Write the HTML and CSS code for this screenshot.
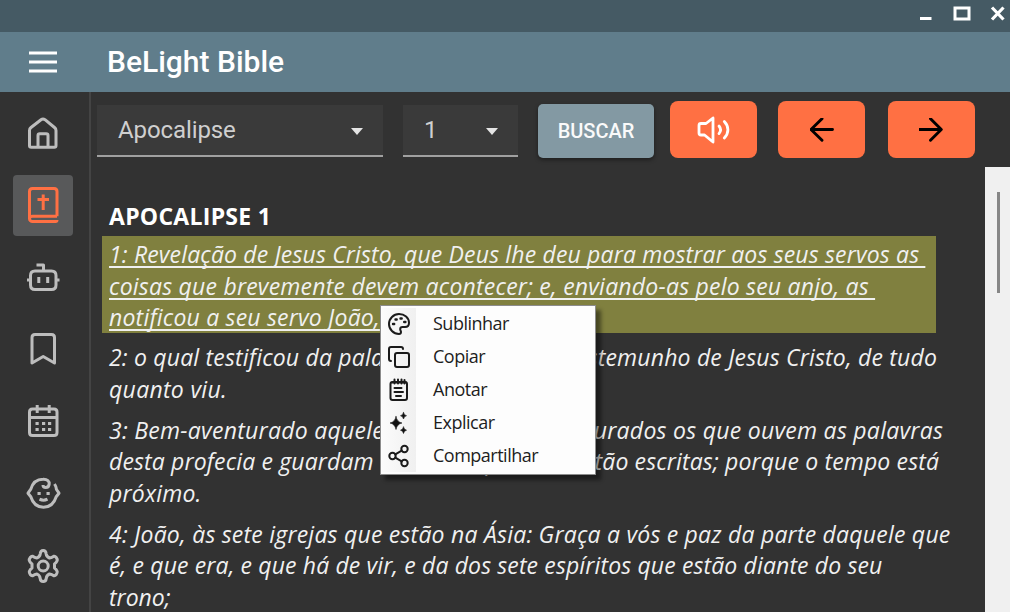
FILE: index.html
```html
<!DOCTYPE html>
<html lang="pt-BR">
<head>
<meta charset="utf-8">
<title>BeLight Bible</title>
<link rel="stylesheet" href="styles.css">
</head>
<body>
<div class="window">
  <header class="titlebar">
    <svg class="win-controls" width="90" height="28" viewBox="0 0 90 28" fill="none" stroke="#fff">
      <path d="M-1 18.5h12.5" stroke-width="3"/>
      <path d="M35 8h14v11H35z" stroke-width="3"/>
      <path d="M72 7.500l11.500 12M83.500 7.500l-11.500 12" stroke-width="3.200"/>
    </svg>
  </header>
  <header class="appbar">
    <svg class="burger" width="28" height="24" viewBox="0 0 28 24" stroke="#fff" stroke-width="2.800"><path d="M0 3h28M0 12h28M0 21h28"/></svg>
    <h1 class="app-title">BeLight Bible</h1>
  </header>
  <div class="body">
    <nav class="sidebar">
      <a class="nav-item"><svg viewBox="0 0 36 36"><path d="M4.500 14.500c0-1.300.5-2.200 1.500-3L16 3.700c1.300-1 2.700-1 4 0l9.500 7.800c1 .8 1.500 1.700 1.500 3V29.500c0 1-.7 1.700-1.700 1.700H6.200c-1 0-1.700-.7-1.700-1.700zM13 31V19.500c0-1.200.7-1.800 1.800-1.800h6.400c1.100 0 1.800.6 1.800 1.800V31"/></svg></a>
      <a class="nav-item active"><svg viewBox="0 0 36 36"><path d="M32 28.200H7.500C5.800 28.200 4.500 29.300 4.500 30.800S5.800 33.500 7.500 33.500H30.500c.9 0 1.500-.7 1.500-1.500M4.500 31V3.500C4.500 1.500 5.500.5 7.500.5H29c2 0 3 1 3 3V28.200M18.200 6.500V22M12.500 11.500H24"/></svg></a>
      <a class="nav-item"><svg viewBox="0 0 36 36"><path d="M10 11H26.500c2.800 0 4.500 1.500 4.500 4.500v9.500c0 3-1.700 4.500-4.500 4.500H10c-2.800 0-4.500-1.500-4.500-4.500V15.500c0-3 1.700-4.500 4.500-4.500zM18.500 10.500V5H11.500M2 20H5.500M31 20H34.500M13.800 17v6M22.700 17v6"/></svg></a>
      <a class="nav-item"><svg viewBox="0 0 36 36"><path d="M7 31V5.500c0-2 .9-3 3-3h16.500c2 0 3 1 3 3V31L18.200 24.500z"/></svg></a>
      <a class="nav-item"><svg viewBox="0 0 36 36"><path d="M7.500 5H29c2 0 3 1 3 3V28.500c0 2-1 3-3 3H7.500c-2 0-3-1-3-3V8c0-2 1-3 3-3zM5 13.500H32M12.200 1V9M24.200 1V9"/><path class="dots" d="M10.500 19.500h3.200M17 19.500h3.200M23 19.500h3.200M10.500 25.500h3.200M17 25.500h3.200M23 25.500h3.200"/></svg></a>
      <a class="nav-item"><svg viewBox="0 0 36 36"><path d="M29.500 8c1.200 1.700 1.800 3.500 2 5.500L34 17.200l-2.800 3.500C29.200 27.200 24.500 31.200 18.500 31.200S7.800 27.200 5.800 20.700L3 17.200l2.800-4C7.500 7.200 12 3.200 18 3.200c4.500-.2 6.500 2.200 6.200 4.800-.2 2.300-1.800 3.500-3.500 3.500-1.600 0-2.700-1-2.700-2.500M14.500 23.200c2.400 1.200 5.600 1.200 8 0"/><path class="dots" d="M12.500 17.500h3.200M21.500 17.500h3.200"/></svg></a>
      <a class="nav-item"><svg viewBox="0 0 36 36"><path d="M15.200 6Q15.500 2.500 18.200 2.500T21.200 6Q21.500 8.700 24.500 10 27 9.500 28.800 8.300C30.500 7.800 32.500 10.500 32.200 12.500Q31.500 14.500 29.500 16V20Q31.500 21.500 32.200 23.500C32.500 25.500 30.500 28.200 28.800 27.700Q27 26.500 24.500 26 21.500 27.300 21.200 30.500 20.900 33.500 18.200 33.500T15.200 30.500Q14.900 27.300 12 26 9.500 26.500 7.700 27.700C6 28.200 4 25.500 4.300 23.500Q5 21.500 7 20V16Q5 14.500 4.300 12.500C4 10.500 6 7.800 7.700 8.300Q9.500 9.500 12 10 14.900 8.700 15.200 6z"/><circle cx="18.200" cy="18" r="5"/></svg></a>
    </nav>
    <main class="main">
      <div class="toolbar">
        <div class="select book"><span class="value">Apocalipse</span><i class="caret"></i></div>
        <div class="select chapter"><span class="value">1</span><i class="caret"></i></div>
        <button class="search">BUSCAR</button>
        <button class="action speak"><svg width="36" height="32" viewBox="0 0 36 32" fill="none" stroke="#fff" stroke-width="2.800" stroke-linecap="round" stroke-linejoin="round"><path d="M17 4L10 9.500H5c-1.200 0-2 .8-2 2v7.500c0 1.200.8 2 2 2h3.500L17 28z"/><path d="M23 12c2 2.400 2 5.200 0 7.600M28.300 7.500c4.800 5 4.800 11.500 0 16.500"/></svg></button>
        <button class="action prev"><svg width="24" height="24" viewBox="0 0 24 24" fill="none" stroke="#000" stroke-width="2.900" stroke-linecap="round" stroke-linejoin="round"><path d="M22.500 11.500H1M12 .7L1 11.500 12 22.300"/></svg></button>
        <button class="action next"><svg width="24" height="24" viewBox="0 0 24 24" fill="none" stroke="#000" stroke-width="2.900" stroke-linecap="round" stroke-linejoin="round"><path d="M.5 11.500H22M11.500 .7L22.300 11.500 11.500 22.300"/></svg></button>
      </div>
      <div class="content">
        <article class="reader">
          <h2 class="chapter-title">APOCALIPSE 1</h2>
          <p class="verse marked"><span class="line l1">1: Revelação de Jesus Cristo, que Deus lhe deu para mostrar aos seus servos as&nbsp;</span><span class="line l2">coisas que brevemente devem acontecer; e, enviando-as pelo seu anjo, as&nbsp;</span><span class="line l3">notificou a seu servo João,</span></p>
          <p class="verse"><span class="line l4">2: o qual testificou da palavra de Deus, e do testemunho de Jesus Cristo, de tudo</span><span class="line l5">quanto viu.</span></p>
          <p class="verse"><span class="line l6">3: Bem-aventurado aquele que lê, e bem-aventurados os que ouvem as palavras</span><span class="line l7">desta profecia e guardam as coisas que nela estão escritas; porque o tempo está</span><span class="line l8">próximo.</span></p>
          <p class="verse"><span class="line l9">4: João, às sete igrejas que estão na Ásia: Graça a vós e paz da parte daquele que</span><span class="line l10">é, e que era, e que há de vir, e da dos sete espíritos que estão diante do seu</span><span class="line l11">trono;</span></p>
        </article>
        <div class="scrollbar"><div class="thumb"></div></div>
      </div>
    </main>
  </div>
  <div class="menu">
    <div class="menu-item"><svg viewBox="0 0 24 24"><path d="M12 2C6.500 2 2 6.500 2 12c0 5.500 4.500 10 10 10 1.300 0 2-.9 2-2 0-1-.8-1.500-.8-2.700 0-1.300 1-2.300 2.300-2.300H18c2.400 0 4-1.800 4-4.300C22 5.500 17.500 2 12 2z"/><path class="solid" d="M6 12h1.200M8.500 7.500h1.200M13.500 6.500h1.200M17.200 10h1.200"/></svg><span>Sublinhar</span></div>
    <div class="menu-item"><svg viewBox="0 0 24 24"><rect x="8" y="8" width="14" height="14" rx="2"/><path d="M4 16c-1.100 0-2-.9-2-2V4c0-1.100.9-2 2-2h10c1.100 0 2 .9 2 2"/></svg><span>Copiar</span></div>
    <div class="menu-item"><svg viewBox="0 0 24 24"><rect x="3.500" y="4" width="16.500" height="18" rx="2"/><path d="M7.500 1.500v4M11 1.500v4M14.500 1.500v4M17.500 2v3.500M5 4.500h14M7.500 10h7M7.500 14h8.500M9 18h5"/></svg><span>Anotar</span></div>
    <div class="menu-item"><svg viewBox="0 0 24 24"><path class="fill" d="M9 5.500Q10 11 15 12 10 13 9 18.500 8 13 3 12 8 11 9 5.500zM16.500 1.500Q17 4.200 19.500 4.700 17 5.200 16.500 8 16 5.200 13.500 4.700 16 4.200 16.500 1.500zM16.500 16Q17 18.700 19.500 19.200 17 19.700 16.500 22.500 16 19.700 13.500 19.200 16 18.700 16.500 16z"/></svg><span>Explicar</span></div>
    <div class="menu-item"><svg viewBox="0 0 24 24"><circle cx="5.500" cy="12" r="3.200"/><circle cx="17.500" cy="5" r="3.200"/><circle cx="17.500" cy="19" r="3.200"/><path d="M8.300 10.400l6.400-3.800M8.300 13.600l6.400 3.800"/></svg><span>Compartilhar</span></div>
  </div>
</div>
</body>
</html>
```
FILE: styles.css
```css
* { box-sizing: border-box; }
body { margin: 0; background: #323232; font-family: Roboto, sans-serif; }
.window { position: relative; width: 1010px; height: 612px; overflow: hidden; display: flex; flex-direction: column; }
.titlebar { flex: none; height: 32px; background: #455a64; display: flex; justify-content: flex-end; }
.win-controls { display: block; }
.appbar { flex: none; height: 60px; background: #607d8b; display: flex; align-items: center; padding-left: 29px; gap: 50px; }
.burger { display: block; }
.app-title { margin: 0; color: #fff; font-size: 30px; line-height: 60px; font-weight: 500; white-space: nowrap; }
.body { flex: 1; display: flex; min-height: 0; }
.sidebar { flex: none; width: 91px; border-right: 2px solid #444; display: flex; flex-direction: column; align-items: center; gap: 11px; padding: 11px 3px 0 0; }
.nav-item { flex: none; width: 60px; height: 61px; border-radius: 4px; display: flex; align-items: center; justify-content: center; }
.nav-item svg { width: 36px; height: 36px; fill: none; stroke: #bdbdbd; stroke-width: 3; stroke-linejoin: round; overflow: visible; }
.nav-item .dots { stroke-width: 3.2; }
.nav-item.active { background: #58595a; }
.nav-item.active svg { stroke: #ff7043; }
.main { flex: 1; min-width: 0; display: flex; flex-direction: column; }
.toolbar { flex: none; height: 75px; display: flex; align-items: flex-start; padding: 9px 0 0 6px; }
.select { height: 52px; margin-top: 4px; background: #3a3a3a; border-bottom: 2px solid #a0a0a0; display: flex; justify-content: space-between; align-items: center; padding: 0 20px 1px 21px; color: #cfcfcf; font-size: 24px; }
.value { letter-spacing: -.1px; }
.book { width: 286px; }
.chapter { width: 115px; margin-left: 20px; }
.caret { border: 6px solid transparent; border-top: 7px solid #e4e4e4; border-bottom: 0; margin-top: 3px; }
.search { width: 116px; height: 54px; margin: 3px 0 0 20px; padding: 0; border: 0; border-radius: 5px; background: #8399a3; color: #fafafa; font: 500 20px Roboto, sans-serif; box-shadow: 0 2px 4px rgba(0,0,0,.4); }
.action { width: 87px; height: 57px; padding: 0; border: 0; border-radius: 8px; background: #ff7043; display: flex; align-items: center; justify-content: center; }
.speak { margin-left: 16px; }
.prev { margin-left: 21px; }
.next { margin-left: 22.500px; }
.content { flex: 1; min-height: 0; display: flex; justify-content: space-between; }
.reader { flex: 1; padding: 34px 0 0 11px; color: #f0f0f0; font: italic 23px/31.5px "Open Sans", sans-serif; }
.chapter-title { margin: 0 0 4px 7px; color: #fff; font: bold 23px/31px "Open Sans", sans-serif; letter-spacing: .27px; white-space: nowrap; }
.verse { margin: 0 0 9.400px; padding-left: 7px; }
.line { display: block; width: max-content; white-space: nowrap; }
.l1 { letter-spacing: .16px; }
.l2, .l9 { letter-spacing: .22px; }
.l3 { letter-spacing: .2px; }
.l4 { letter-spacing: .185px; }
.l5 { letter-spacing: .3px; }
.l6 { letter-spacing: .27px; }
.l7 { letter-spacing: .14px; }
.l8 { letter-spacing: .2px; }
.l10 { letter-spacing: .13px; }
.marked { width: 834px; height: 97px; margin-bottom: 9.300px; background: #80803f; padding-top: 3.300px; }
.marked .line { text-decoration: underline; text-decoration-thickness: 1.500px; text-underline-offset: 3px; text-decoration-skip-ink: none; }
.scrollbar { flex: none; width: 25px; background: #f0f0f0; padding: 25px 0 0 12px; }
.thumb { width: 3px; height: 101px; background: #868686; }
.menu { position: absolute; left: 380px; top: 305px; width: 216px; height: 170px; border: 1px solid #8c8c8c; padding: 1px 1px; background: #fdfdfd linear-gradient(90deg, #fbfbfb, #f0f0f0) no-repeat 1px 2px / 34px 164px; box-shadow: 5px 5px 4px rgba(0,0,0,.45); }
.menu-item { height: 33px; display: flex; align-items: center; gap: 22px; padding-left: 5px; color: #1e1e1e; font: 18px/24px "Open Sans", sans-serif; letter-spacing: -.5px; white-space: nowrap; }
.menu-item span { padding-bottom: 2px; }
.menu-item svg { flex: none; width: 24px; height: 24px; fill: none; stroke: #1b1b1b; stroke-width: 2; stroke-linecap: round; }
.menu-item .fill { fill: #111; stroke-width: .6; }
.menu-item .solid { stroke-width: 2.400; }
```
